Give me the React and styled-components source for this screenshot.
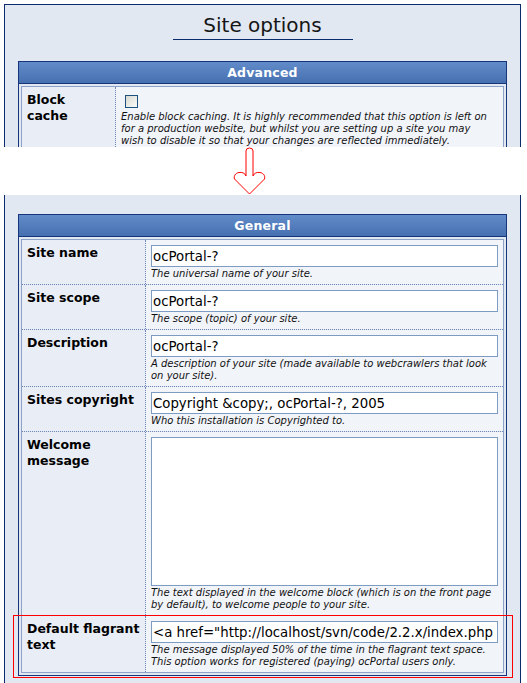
import styled, { createGlobalStyle } from 'styled-components';

const GlobalStyle = createGlobalStyle`
  html, body {
    margin: 0;
    padding: 0;
    background: #fff;
  }
  body {
    font-family: "DejaVu Sans", Verdana, sans-serif;
    color: #000;
  }
`

const Page = styled.div`
  width: 527px;
  height: 683px;
  overflow: hidden;
  display: flex;
  flex-direction: column;
`

const Panel = styled.div`
  margin-left: 4px;
  width: 517px;
  box-sizing: border-box;
  background: #e2e8f1;
  border: 1px solid #0c2b6a;
  border-bottom: none;
  ${p => p.$cut === 'bottom' && `
    margin-top: 4px;
    height: 143px;
    overflow: hidden;
    padding-top: 8px;
  `}
  ${p => p.$cut === 'top' && `
    border-top: none;
    flex: 1;
    padding-top: 19px;
  `}
`

const Title = styled.h1`
  margin: 0 auto;
  width: 180px;
  padding-bottom: 2px;
  border-bottom: 1px solid #0c2b6a;
  font-size: 20px;
  line-height: 24px;
  font-weight: normal;
  text-align: center;
  color: #151515;
`

const ArrowStrip = styled.div`
  height: 48px;
  padding-left: 232px;
  display: flex;
  align-items: flex-start;
`

const Table = styled.div`
  margin: ${p => p.$top || 0}px 13px 0;
  border: 1px solid #16357a;
  background: #e2e8f1;
`

const TableHead = styled.div`
  height: 21px;
  line-height: 21px;
  border-bottom: 1px solid #16357a;
  background: linear-gradient(#628bca, #4770b0);
  color: #fff;
  font-size: 12.5px;
  font-weight: bold;
  text-align: center;
  letter-spacing: 0.2px;
`

const TableBody = styled.div`
  padding: 2px;
`

const Rows = styled.div`
  border: 1px solid #8ca3c7;
`

const Row = styled.div`
  position: relative;
  display: grid;
  grid-template-columns: ${p => p.$labelWidth}px 1fr;

  & + & {
    border-top: 1px dotted #6f87b6;
  }
`

/* red highlight drawn over the last row */
const Marker = styled.div`
  position: absolute;
  z-index: 2;
  top: -1px;
  left: -9px;
  width: 500px;
  bottom: -6px;
  box-sizing: border-box;
  border: 1px solid red;
  background: transparent;
  pointer-events: none;
`

const Label = styled.div`
  padding: 5px;
  background: #e9edf5;
  border-right: 1px dotted #6f87b6;
  font-size: 12.5px;
  font-weight: bold;
  line-height: 16px;
`

const Field = styled.div`
  min-width: 0;
  padding: 5px 5px 4px;
  background: #f1f4f9;
`

const TextInput = styled.input`
  display: block;
  box-sizing: border-box;
  width: 100%;
  height: 22px;
  margin: 0;
  padding: 0 2px 0 1px;
  border: 1px solid #7e9cc3;
  background: #fff;
  color: #000;
  font-family: "DejaVu Sans", Verdana, sans-serif;
  font-size: 13.3px;
  outline: none;
`

const TextArea = styled.textarea`
  display: block;
  box-sizing: border-box;
  width: 100%;
  height: 149px;
  margin: 0 0 1px;
  padding: 1px;
  border: 1px solid #7e9cc3;
  background: #fff;
  resize: none;
  font-family: "DejaVu Sans", Verdana, sans-serif;
  font-size: 13.3px;
  outline: none;
`

const Check = styled.input.attrs({ type: 'checkbox' })`
  appearance: none;
  display: block;
  box-sizing: border-box;
  width: 13px;
  height: 13px;
  margin: 3px 3px 3px 4px;
  border: 1px solid #1c5180;
  background: linear-gradient(135deg, #d9d9d2, #fafaf8);
`

const Note = styled.p`
  margin: 1px 0 0;
  font-size: 10px;
  line-height: 12px;
  font-style: italic;
  color: #111;
  white-space: nowrap;
`

const DownArrow = () => (
  <svg width="36" height="48" viewBox="0 0 36 48">
    <path
      d="M14,29 L14,4 Q14,1 17.5,1 Q21,1 21,4 L21,29
         C22,26 25,25 28,25.5 C31.5,26 33.5,29 32.5,32 L17.5,47 L2.5,32
         C1.5,29 3.5,26 7,25.5 C10,25 13,26 14,29 Z"
      fill="#fff"
      stroke="#ff0000"
      strokeWidth="1"
    />
  </svg>
)

const options = [
  {
    label: 'Site name',
    value: 'ocPortal-?',
    note: ['The universal name of your site.'],
  },
  {
    label: 'Site scope',
    value: 'ocPortal-?',
    note: ['The scope (topic) of your site.'],
  },
  {
    label: 'Description',
    value: 'ocPortal-?',
    note: [
      'A description of your site (made available to webcrawlers that look',
      'on your site).',
    ],
  },
  {
    label: 'Sites copyright',
    value: 'Copyright &copy;, ocPortal-?, 2005',
    note: ['Who this installation is Copyrighted to.'],
  },
  {
    label: 'Welcome message',
    multiline: true,
    note: [
      'The text displayed in the welcome block (which is on the front page',
      'by default), to welcome people to your site.',
    ],
  },
  {
    label: 'Default flagrant text',
    value: '<a href="http://localhost/svn/code/2.2.x/index.php',
    marked: true,
    note: [
      'The message displayed 50% of the time in the flagrant text space.',
      'This option works for registered (paying) ocPortal users only.',
    ],
  },
]

const App = () => {
  return (
    <Page>
      <GlobalStyle />
      <Panel $cut="bottom">
        <Title>Site options</Title>
        <Table $top={21}>
          <TableHead>Advanced</TableHead>
          <TableBody>
            <Rows>
              <Row $labelWidth={94}>
                <Label>Block<br />cache</Label>
                <Field>
                  <Check />
                  <Note>
                    Enable block caching. It is highly recommended that this option is left on<br />
                    for a production website, but whilst you are setting up a site you may<br />
                    wish to disable it so that your changes are reflected immediately.
                  </Note>
                </Field>
              </Row>
            </Rows>
          </TableBody>
        </Table>
      </Panel>

      <ArrowStrip>
        <DownArrow />
      </ArrowStrip>

      <Panel $cut="top">
        <Table>
          <TableHead>General</TableHead>
          <TableBody>
            <Rows>
              {options.map(opt => (
                <Row key={opt.label} $labelWidth={124}>
                  <Label>{opt.label}</Label>
                  <Field>
                    {opt.multiline
                      ? <TextArea defaultValue="" />
                      : <TextInput defaultValue={opt.value} />}
                    <Note>
                      {opt.note.map((line, i) => (
                        <span key={i}>{i > 0 && <br />}{line}</span>
                      ))}
                    </Note>
                  </Field>
                  {opt.marked && <Marker />}
                </Row>
              ))}
            </Rows>
          </TableBody>
        </Table>
      </Panel>
    </Page>
  )
}

export default App
